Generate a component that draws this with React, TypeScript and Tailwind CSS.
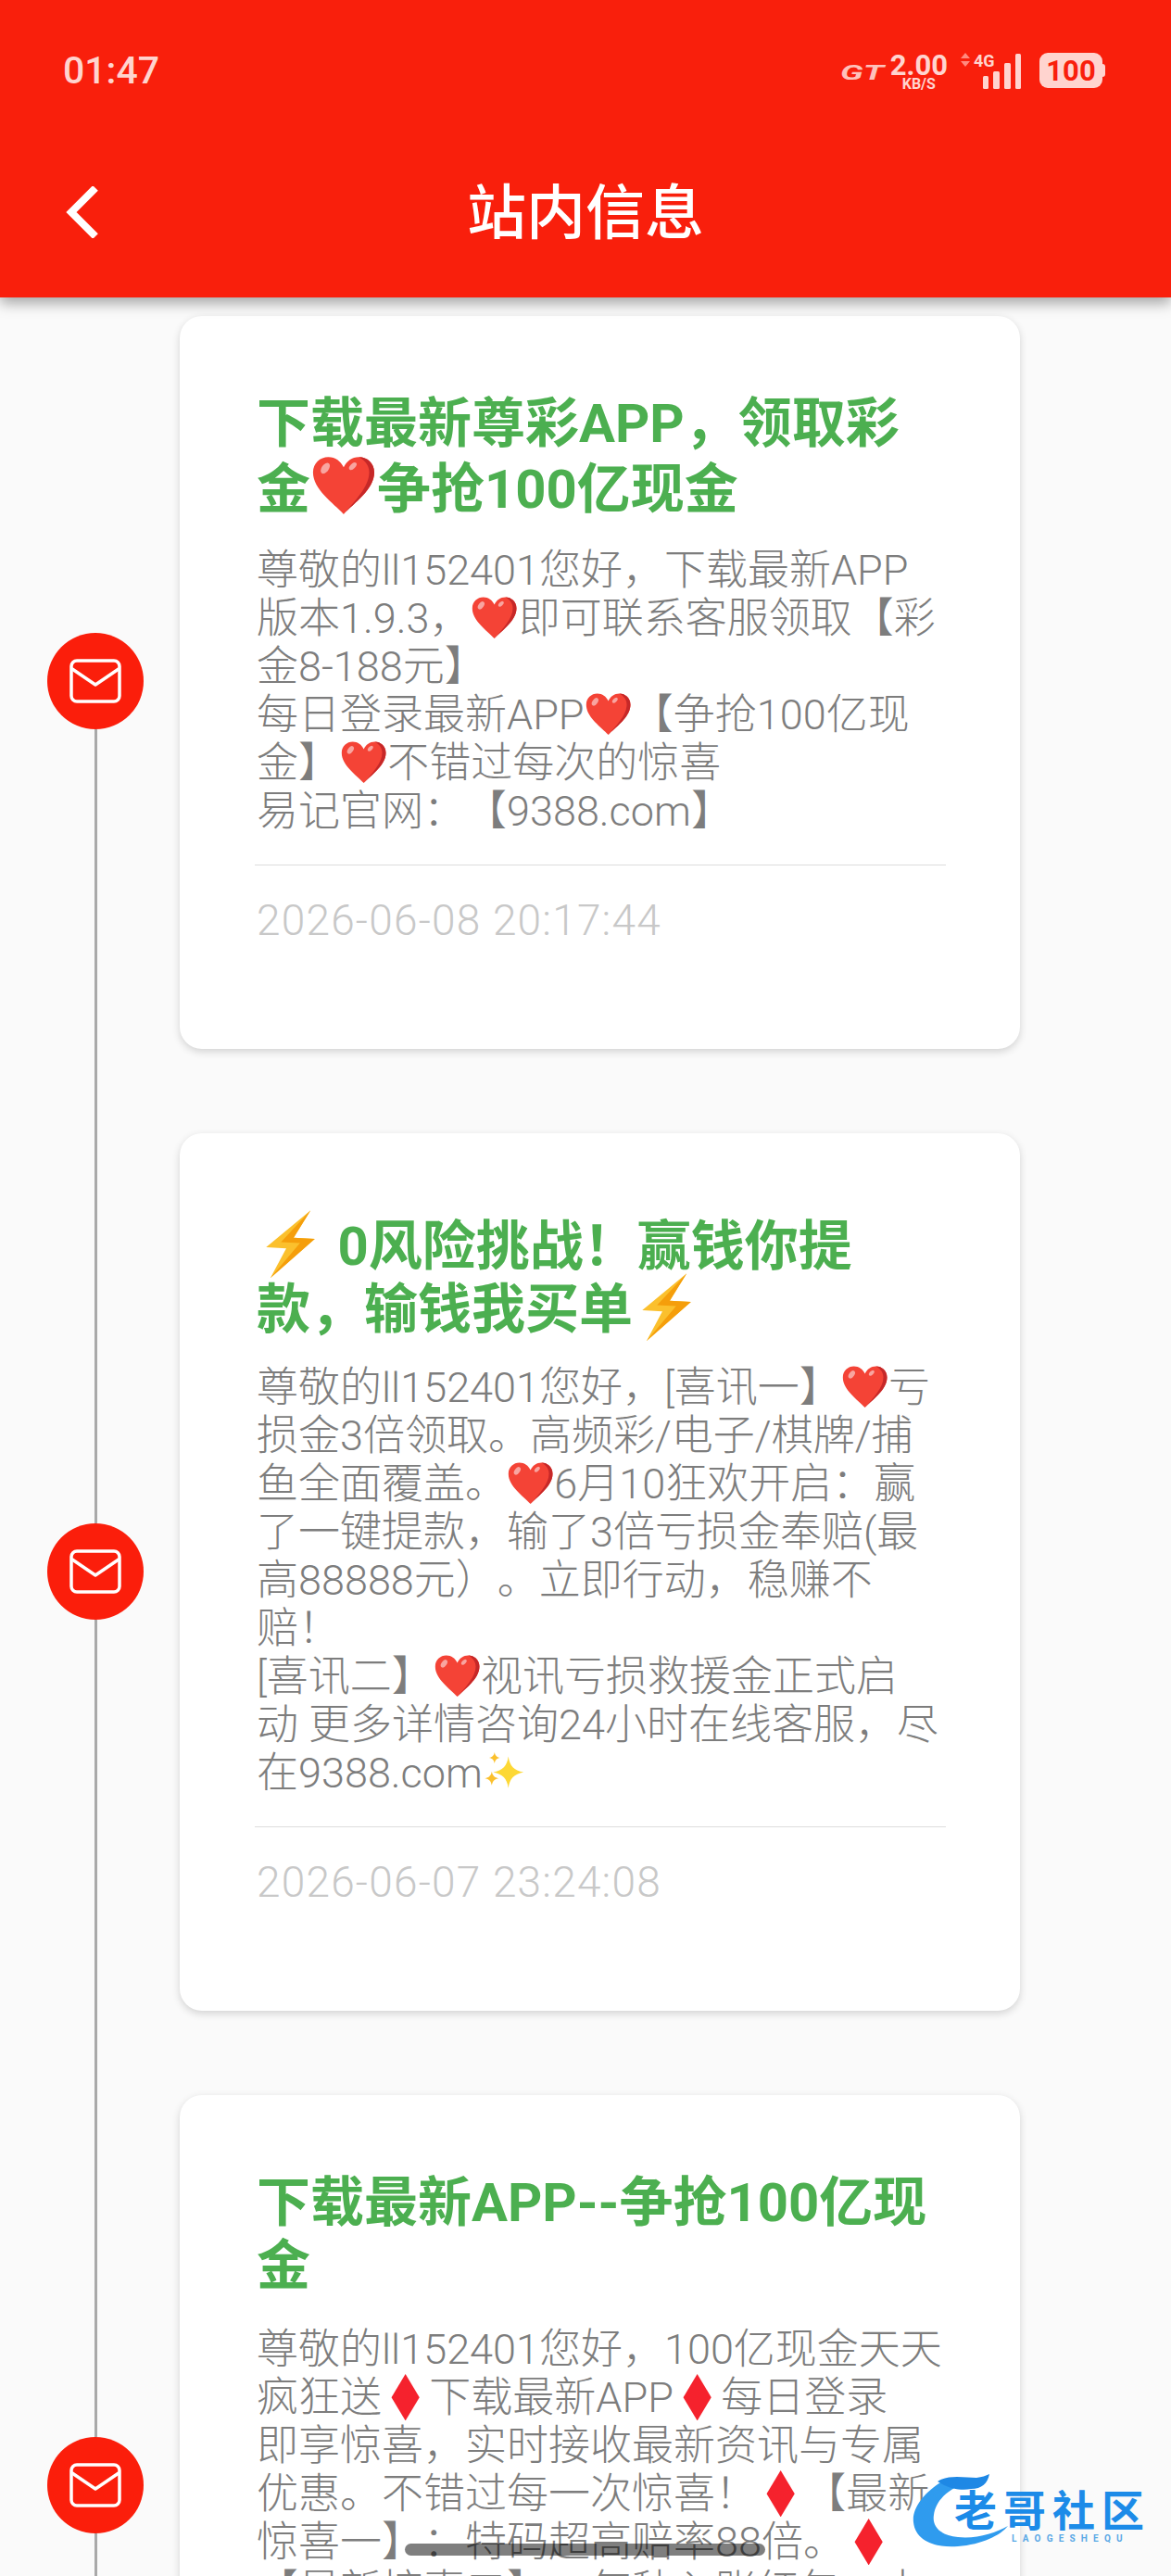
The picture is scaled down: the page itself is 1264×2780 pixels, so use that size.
import React from 'react';

const Heart = ({ big = false }: { big?: boolean }) => (
  <svg viewBox="0 0 64 60" className={`inline-block align-[-0.16em] ${big ? 'h-[1.14em] w-[1.24em]' : 'h-[1.06em] w-[1.14em]'}`}>
    <path d="M32 58C22 47 2 34 2 17 2 8 9 2 17 2c7 0 12 4 15 10C35 6 40 2 47 2c8 0 15 6 15 15 0 17-20 30-30 41z" fill="#f44336" />
    <path d="M47 2c8 0 15 6 15 15 0 17-20 30-30 41 11-13 25-27 25-41 0-6-3-11-10-15z" fill="#c62828" />
    <ellipse cx="14" cy="13" rx="3.5" ry="6" transform="rotate(35 14 13)" fill="#f8a5a0" />
    <ellipse cx="41" cy="11" rx="2.5" ry="4.5" transform="rotate(45 41 11)" fill="#f8a5a0" />
  </svg>
);

const Bolt = () => (
  <svg viewBox="0 0 50 66" className="inline-block h-[1.3em] w-[1.26em] align-[-0.26em]">
    <path d="M44 1 2 36l19 1L6 65l42-37-20-1z" fill="#fbc02d" />
    <path d="M44 1 28 27l20 1-42 37 28-33-18-1z" fill="#f59e0b" />
  </svg>
);

const Sparkles = () => (
  <svg viewBox="0 0 64 64" className="inline-block h-[1.06em] w-[1.1em] align-[-0.14em]">
    <path d="M36 10c2 14 8 20 22 23-14 3-20 9-22 23-2-14-8-20-22-23 14-3 20-9 22-23z" fill="#fdd835" />
    <path d="M12 32c1 6 4 9 10 10-6 1-9 4-10 10-1-6-4-9-10-10 6-1 9-4 10-10z" fill="#fbc02d" />
    <path d="M16 4c1 5 3 7 8 8-5 1-7 3-8 8-1-5-3-7-8-8 5-1 7-3 8-8z" fill="#fbc02d" />
  </svg>
);

const Diamond = () => (
  <svg viewBox="0 0 30 50" className="inline-block h-[1.12em] w-[1.14em] align-[-0.2em]">
    <path d="M15 0 30 25 15 50 0 25z" fill="#f5222d" />
  </svg>
);

const MailDot = () => (
  <div className="w-[104px] h-[104px] rounded-full bg-[#fb1e0b] flex items-center justify-center shrink-0">
    <svg viewBox="0 0 56 48" className="w-[56px] h-[48px]" fill="none" stroke="#fff" strokeWidth="3.5" strokeLinejoin="round" strokeLinecap="round">
      <rect x="2" y="2" width="52" height="44" rx="6" />
      <path d="M3 11l25 17 25-17" />
    </svg>
  </div>
);

const StatusBar = () => (
  <div className="h-[152px] pl-[68px] pr-[71px] flex items-start justify-between text-[#ffd4cf]">
    <span className="mt-[52px] text-[41px] leading-[48px] font-medium">01:47</span>
    <div className="mt-[57px] flex items-start">
      <span className="mt-[11px] w-[54px] text-[22px] leading-[22px] font-bold italic opacity-90 inline-block origin-left scale-x-[1.7]">GT</span>
      <div className="flex flex-col items-center">
        <span className="text-[31px] leading-[27px] font-bold">2.00</span>
        <span className="text-[16px] leading-[14px] font-bold">KB/S</span>
      </div>
      <svg viewBox="0 0 66 40" className="ml-[14px] w-[66px] h-[40px]" fill="currentColor">
        <path d="M5 0l5 6H0zM5 15 0 9h10z" fill="#ff8a7f" />
        <rect x="24" y="25" width="6" height="14" rx="1.5" />
        <rect x="35" y="20" width="7" height="19" rx="1.5" />
        <rect x="47" y="11" width="7" height="28" rx="1.5" />
        <rect x="59" y="1" width="6" height="38" rx="1.5" />
      </svg>
      <span className="ml-[-52px] mr-[48px] text-[18px] leading-[18px] font-bold w-[23px]">4G</span>
      <div className="flex items-center">
        <div className="w-[68px] h-[38px] rounded-[9px] bg-[#ffd4cf] flex items-center justify-center text-[#f91f0c] text-[31px] leading-none font-bold">100</div>
        <div className="w-[3px] h-[14px] rounded-r-sm bg-[#ffd4cf]" />
      </div>
    </div>
  </div>
);

const cards = [
  {
    title: [<>下载最新尊彩APP，领取彩</>, <>金<Heart big />争抢100亿现金</>],
    body: [
      <>尊敬的ll152401您好，下载最新APP</>,
      <>版本1.9.3，<Heart />即可联系客服领取【彩</>,
      <>金8-188元】</>,
      <>每日登录最新APP<Heart />【争抢100亿现</>,
      <>金】<Heart />不错过每次的惊喜</>,
      <>易记官网：【9388.com】</>,
    ],
    date: '2026-06-08 20:17:44',
  },
  {
    title: [<><Bolt /> 0风险挑战！赢钱你提</>, <>款，输钱我买单<Bolt /></>],
    body: [
      <>尊敬的ll152401您好，[喜讯一】<Heart />亏</>,
      <>损金3倍领取。高频彩/电子/棋牌/捕</>,
      <>鱼全面覆盖。<Heart />6月10狂欢开启：赢</>,
      <>了一键提款，输了3倍亏损金奉赔(最</>,
      <>高88888元）。立即行动，稳赚不</>,
      <>赔！</>,
      <>[喜讯二】<Heart />视讯亏损救援金正式启</>,
      <>动 更多详情咨询24小时在线客服，尽</>,
      <>在9388.com<Sparkles /></>,
    ],
    date: '2026-06-07 23:24:08',
  },
  {
    title: [<>下载最新APP--争抢100亿现</>, <>金</>],
    body: [
      <>尊敬的ll152401您好，100亿现金天天</>,
      <>疯狂送<Diamond />下载最新APP<Diamond />每日登录</>,
      <>即享惊喜，实时接收最新资讯与专属</>,
      <>优惠。不错过每一次惊喜！<Diamond />【最新</>,
      <>惊喜一】：特码超高赔率88倍。<Diamond /></>,
      <>【最新惊喜二】：每秒入账红包，中</>,
      <>奖即刻到账，尽在9388.com</>,
    ],
    date: '2026-06-06 21:10:32',
  },
];

export default function App() {
  return (
    <div className="relative h-[2780px] w-[1264px] overflow-hidden bg-[#fafafa] font-['Roboto','Noto_Sans_CJK_SC',sans-serif] [text-spacing-trim:space-all]">
      <header className="relative z-10 h-[321px] bg-[#f91f0c] shadow-[0_6px_14px_rgba(0,0,0,0.35)]">
        <StatusBar />
        <div className="relative flex h-[160px] items-center justify-center pb-[2px]">
          <svg viewBox="0 0 36 56" className="absolute left-[71px] top-[49px] w-[36px] h-[56px]" fill="none" stroke="#fff" strokeWidth="8">
            <path d="M32 2 6 28l26 26" />
          </svg>
          <h1 className="text-[64px] leading-[80px] text-white font-medium">站内信息</h1>
        </div>
      </header>

      <div className="-mt-[28px]">
        {cards.map((card, i) => (
          <div key={i} className={`flex items-stretch pr-[163px] pb-[45px] ${i === 0 ? 'pt-[48px]' : 'pt-[46px]'}`}>
            <div className={`w-[194px] shrink-0 flex flex-col items-center pl-[12px] -mb-[45px] ${i === 0 ? '-mt-[48px]' : '-mt-[46px]'}`}>
              <div className={`flex-1 w-[3px] ${i === 0 ? '' : 'bg-[#a9a9a9]'}`} />
              <MailDot />
              <div className="flex-1 w-[3px] bg-[#a9a9a9]" />
            </div>
            <div className="flex-1 rounded-[24px] bg-white pl-[83px] pr-[80px] pt-[82px] pb-[113px] shadow-[0_3px_8px_rgba(0,0,0,0.16)]">
              <h2 className="text-[58px] leading-[68px] font-bold text-[#4caf50] whitespace-nowrap">
                {card.title.map((line, j) => <div key={j} className="h-[68px]">{line}</div>)}
              </h2>
              <div className="mt-[31px] text-[45px] leading-[52px] text-[#7d7d7d] whitespace-nowrap font-light">
                {card.body.map((line, j) => <div key={j} className="h-[52px]">{line}</div>)}
              </div>
              <div className="-ml-[2px] mt-[31px] border-t border-[#dddddd]" />
              <div className="mt-[33px] text-[46px] leading-[52px] tracking-[1.2px] text-[#c8c8c8] font-light whitespace-nowrap">{card.date}</div>
            </div>
          </div>
        ))}
      </div>

      {/* gesture bar and watermark lie over the list */}
      <div className="absolute left-[437px] top-[2745px] h-[13px] w-[389px] rounded-full bg-black/50" />
      <div className="absolute left-[984px] top-[2662px] w-[280px] h-[112px]">
        <svg viewBox="0 0 280 112" className="absolute inset-0 w-[280px] h-[112px]">
          <path d="M40 12C16 24 0 44 2 60c2 20 24 28 48 26 26-2 46-12 54-22-14 8-34 14-54 12-20-2-28-12-26-24 2-16 16-28 34-34z" fill="#2f9bee" />
          <path d="M28 16c12-8 30-4 42-4 6-1 10-2 14-4-2 10-8 16-20 16-10 2-24 0-36-8z" fill="#1e88e5" />
        </svg>
        <div className="absolute left-[46px] top-[18px] text-[46px] leading-[60px] font-bold text-[#1c8be8] whitespace-nowrap tracking-[7px]">老哥社区</div>
        <div className="absolute left-[108px] top-[71px] text-[10px] leading-[14px] font-bold tracking-[6.2px] text-[#5aa9e6] whitespace-nowrap">LAOGESHEQU</div>
      </div>
    </div>
  );
}
